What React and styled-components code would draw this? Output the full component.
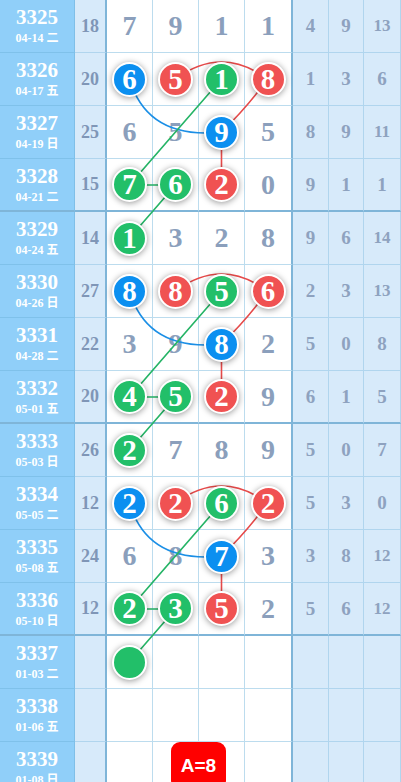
import React from 'react';
import styled, { createGlobalStyle } from 'styled-components';

const GlobalStyle = createGlobalStyle`
  html, body { margin: 0; padding: 0; overflow: hidden; background: #fff; }
  body { font-family: 'Liberation Serif', 'Noto Sans CJK SC', serif; }
`;

const ROW_H = 53;
const CX = [129.5, 175.5, 221.5, 267.5];
const cy = (r) => r * ROW_H + 26;

const rows = [
  { no: '3325', date: '04-14 二', sum: 18, d: [7, 9, 1, 1], c: [], s: [4, 9, 13] },
  { no: '3326', date: '04-17 五', sum: 20, d: [6, 5, 1, 8], c: ['b', 'r', 'g', 'r'], s: [1, 3, 6] },
  { no: '3327', date: '04-19 日', sum: 25, d: [6, 5, 9, 5], c: [null, null, 'b'], s: [8, 9, 11] },
  { no: '3328', date: '04-21 二', sum: 15, d: [7, 6, 2, 0], c: ['g', 'g', 'r'], s: [9, 1, 1] },
  { no: '3329', date: '04-24 五', sum: 14, d: [1, 3, 2, 8], c: ['g'], s: [9, 6, 14] },
  { no: '3330', date: '04-26 日', sum: 27, d: [8, 8, 5, 6], c: ['b', 'r', 'g', 'r'], s: [2, 3, 13] },
  { no: '3331', date: '04-28 二', sum: 22, d: [3, 9, 8, 2], c: [null, null, 'b'], s: [5, 0, 8] },
  { no: '3332', date: '05-01 五', sum: 20, d: [4, 5, 2, 9], c: ['g', 'g', 'r'], s: [6, 1, 5] },
  { no: '3333', date: '05-03 日', sum: 26, d: [2, 7, 8, 9], c: ['g'], s: [5, 0, 7] },
  { no: '3334', date: '05-05 二', sum: 12, d: [2, 2, 6, 2], c: ['b', 'r', 'g', 'r'], s: [5, 3, 0] },
  { no: '3335', date: '05-08 五', sum: 24, d: [6, 8, 7, 3], c: [null, null, 'b'], s: [3, 8, 12] },
  { no: '3336', date: '05-10 日', sum: 12, d: [2, 3, 5, 2], c: ['g', 'g', 'r'], s: [5, 6, 12] },
  { no: '3337', date: '01-03 二', d: ['', '', '', ''], c: ['g'], s: ['', '', ''] },
  { no: '3338', date: '01-06 五', d: ['', '', '', ''], c: [], s: ['', '', ''] },
  { no: '3339', date: '01-08 日', d: ['', '', '', ''], c: [], s: ['', '', ''] },
];

const BALL = { b: '#0b8ff0', r: '#f05252', g: '#22bf69' };
const LINE = { b: '#1b8fe6', r: '#e64a4a', g: '#25b466' };

const Board = styled.div`
  position: relative;
  width: 401px;
`;

const Row = styled.div`
  display: grid;
  grid-template-columns: 75px 32px 46px 46px 46px 48px 36px 35px 37px;
  height: ${ROW_H}px;
`;

const Cell = styled.div`
  box-sizing: border-box;
  display: flex;
  align-items: center;
  justify-content: center;
  border-bottom: ${(p) => (p.$thick ? '2px solid #7fb5d8' : '1px solid #bcdcee')};
`;

const IssueCell = styled(Cell)`
  flex-direction: column;
  background: #90cff9;
  color: #fff;
  font-weight: bold;
  border-right: 1px solid #7fbfe8;
  border-bottom-color: ${(p) => (p.$thick ? '#7fb5d8' : '#7fc1ea')};
`;

const IssueNo = styled.div`
  font-size: 21px;
  line-height: 22px;
`;

const IssueDate = styled.div`
  font-size: 12px;
  line-height: 15px;
  margin-top: 3px;
`;

const SumCell = styled(Cell)`
  background: #d7eafa;
  color: #7f96b7;
  font-weight: bold;
  font-size: 18px;
  border-right: 2px solid #7fb5d8;
  border-bottom-color: ${(p) => (p.$thick ? '#7fb5d8' : '#b0d5ee')};
`;

const DigitCell = styled(Cell)`
  background: #fff;
  color: #8b9fbc;
  font-weight: bold;
  font-size: 28px;
  border-right: ${(p) => (p.$edge ? '2px solid #7fb5d8' : '1px solid #bcdcee')};
`;

const SideCell = styled(Cell)`
  background: #d7eafa;
  color: #8ea2bf;
  font-weight: bold;
  font-size: ${(p) => (p.$small ? '17px' : '19px')};
  border-right: 1px solid #b0d5ee;
  border-bottom-color: ${(p) => (p.$thick ? '#7fb5d8' : '#b0d5ee')};
`;

const Ball = styled.div`
  position: relative;
  z-index: 2;
  box-sizing: border-box;
  width: 35px;
  height: 35px;
  border-radius: 50%;
  border: 2px solid #fff;
  background: ${(p) => BALL[p.$c]};
  box-shadow: 0 1px 6px rgba(0, 0, 0, 0.4);
  color: #fff;
  font-size: 29px;
  line-height: 31px;
  text-align: center;
`;

const Lines = styled.svg`
  position: absolute;
  left: 0;
  top: 0;
  z-index: 1;
  pointer-events: none;
`;

const Badge = styled.div`
  position: absolute;
  z-index: 3;
  left: 171px;
  top: 742px;
  width: 55px;
  height: 48px;
  border-radius: 9px;
  background: #ff0000;
  color: #fff;
  font-family: 'Liberation Sans', Arial, sans-serif;
  font-weight: bold;
  font-size: 19px;
  padding-top: 13px;
  box-sizing: border-box;
  text-align: center;
`;

function groupPaths(g) {
  const y0 = cy(g);
  const y1 = cy(g + 1);
  const y2 = cy(g + 2);
  const y3 = cy(g + 3);
  return [
    { c: 'r', d: `M${CX[1]} ${y0} Q${CX[2]} ${y0 - 34} ${CX[3]} ${y0}` },
    { c: 'r', d: `M${CX[3]} ${y0} Q${CX[3] - 20} ${y0 + 28} ${CX[2]} ${y1} L${CX[2]} ${y2}` },
    { c: 'b', d: `M${CX[0]} ${y0} Q${CX[0] + 18} ${y1 + 8} ${CX[2]} ${y1}` },
    { c: 'g', d: `M${CX[2]} ${y0} L${CX[0]} ${y2} L${CX[1]} ${y2} L${CX[0]} ${y3}` },
  ];
}

export default function App() {
  const paths = [1, 5, 9].flatMap(groupPaths);
  return (
    <>
      <GlobalStyle />
      <Board>
        <Lines width="401" height={rows.length * ROW_H}>
          {paths.map((p, i) => (
            <path key={i} d={p.d} fill="none" stroke={LINE[p.c]} strokeWidth="1.6" />
          ))}
        </Lines>
        {rows.map((row, i) => {
          const thick = i % 4 === 3;
          return (
            <Row key={row.no}>
              <IssueCell $thick={thick}>
                <IssueNo>{row.no}</IssueNo>
                <IssueDate>{row.date}</IssueDate>
              </IssueCell>
              <SumCell $thick={thick}>{row.sum}</SumCell>
              {row.d.map((v, j) => (
                <DigitCell key={j} $thick={thick} $edge={j === 3}>
                  {row.c[j] ? <Ball $c={row.c[j]}>{v}</Ball> : v}
                </DigitCell>
              ))}
              {row.s.map((v, j) => (
                <SideCell key={j} $thick={thick} $small={String(v).length > 1}>
                  {v}
                </SideCell>
              ))}
            </Row>
          );
        })}
        <Badge>A=8</Badge>
      </Board>
    </>
  );
}
